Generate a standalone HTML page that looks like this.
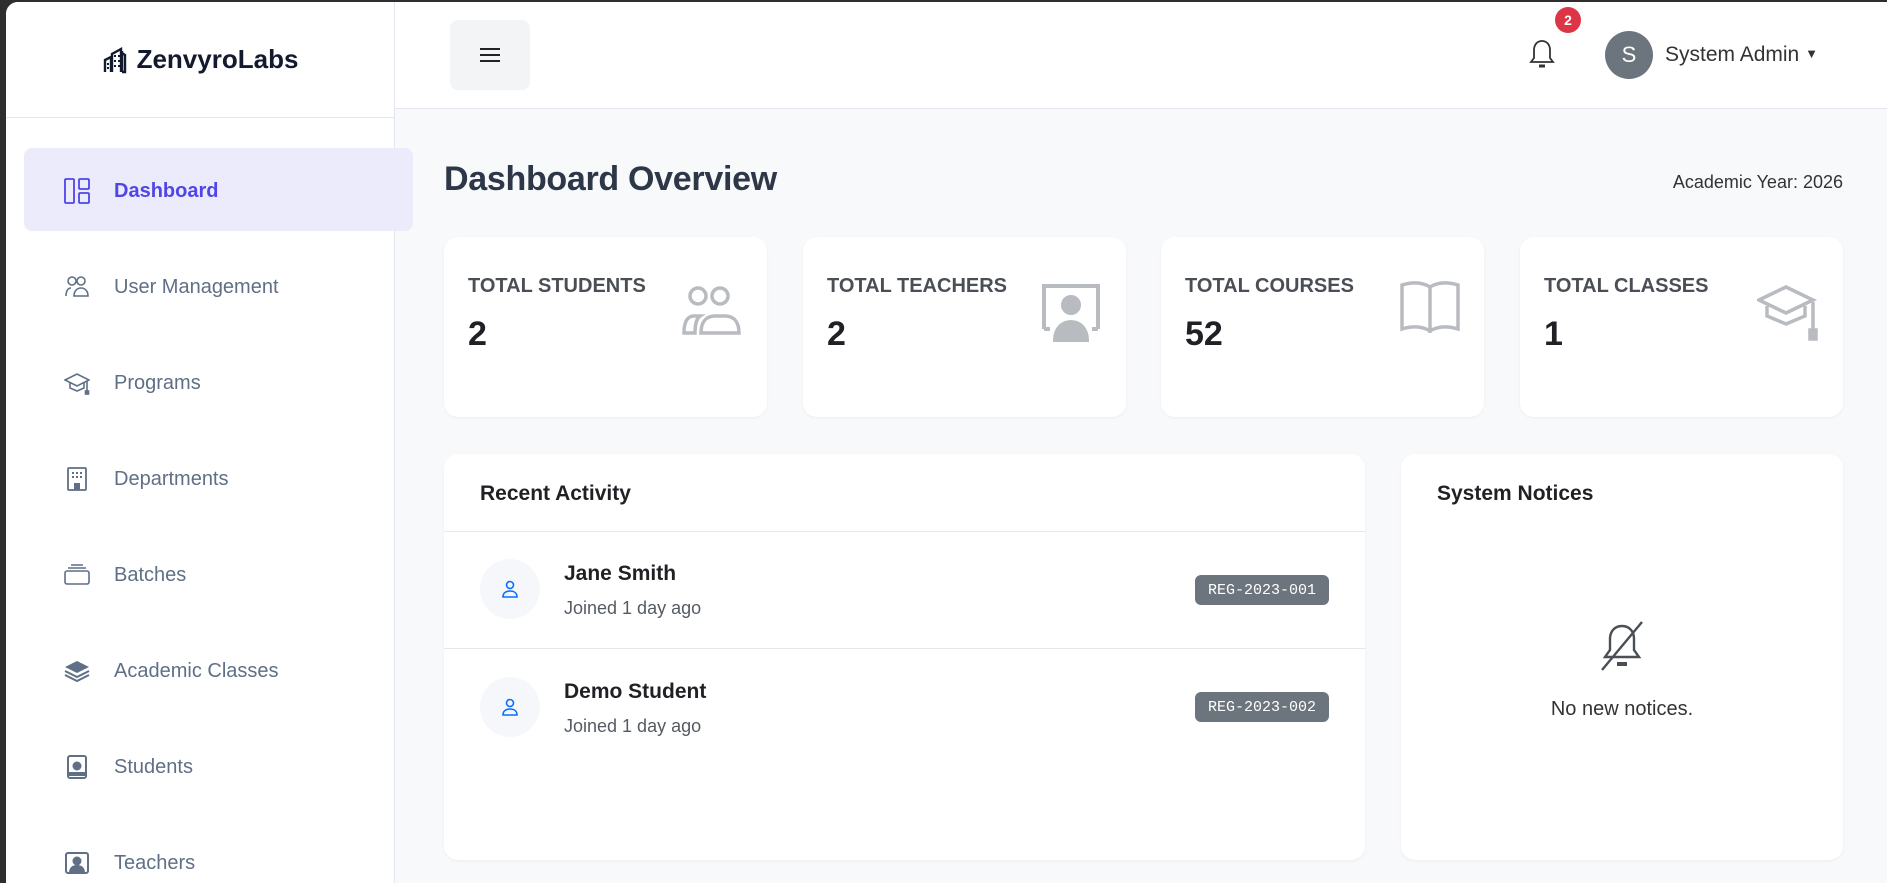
<!DOCTYPE html>
<html><head><meta charset="utf-8"><style>
*{margin:0;padding:0;box-sizing:border-box}
body{width:1887px;height:883px;overflow:hidden;background:#2e2e2e;font-family:"Liberation Sans",sans-serif;position:relative}
.app{position:absolute;left:6px;top:2px;right:0;bottom:0;background:#f8f9fb;border-top-left-radius:12px;overflow:hidden}
.side{position:absolute;left:0;top:0;width:389px;height:100%;background:#fff;border-right:1px solid #e3e6ee}
.logo{position:absolute;left:0;top:0;width:389px;height:116px;border-bottom:1px solid #e3e6ee;display:flex;align-items:center;justify-content:center;font-weight:bold;font-size:26px;color:#141a2e;gap:6px}
.nav{position:absolute;left:58px;font-size:20px;color:#5f6f86;display:flex;align-items:center;gap:24px}
.nav svg{width:26px;height:26px}
.active{position:absolute;left:18px;top:146px;width:389px;height:83px;background:#ecebfb;border-radius:8px}
.hdr{position:absolute;left:389px;top:0;right:0;height:107px;background:#fff;border-bottom:1px solid #e3e6ee}
.card{position:absolute;background:#fff;border-radius:14px;box-shadow:0 1px 3px rgba(0,0,0,.05)}
.lbl{position:absolute;left:24px;top:38px;font-size:20px;font-weight:bold;color:#4a4e55}
.val{position:absolute;left:24px;top:78px;font-size:34px;font-weight:bold;color:#1f2125}
.ic{position:absolute;right:24px;top:44px}
.badge{position:absolute;left:751px;width:134px;height:30px;background:#6c757d;color:#fff;border-radius:6px;font-family:"Liberation Mono",monospace;font-size:15px;display:flex;align-items:center;justify-content:center}
.av{position:absolute;left:36px;width:60px;height:60px;border-radius:50%;background:#f5f7fa;display:flex;align-items:center;justify-content:center}
.nm{position:absolute;left:120px;font-size:21px;font-weight:bold;color:#1f2125}
.sub{position:absolute;left:120px;font-size:18px;color:#555b63}
</style></head><body><div class="app">
<div class="side">
 <div class="logo"><svg width="28" height="28" viewBox="0 0 28 28"><path d="M2 26V14l6-3v15M9 26V8l9-5v23M19 26V5M19 26h3V9l-3-2" fill="none" stroke="#141a2e" stroke-width="2.4"/><g fill="#141a2e"><rect x="11" y="9" width="2" height="2"/><rect x="15" y="9" width="2" height="2"/><rect x="11" y="14" width="2" height="2"/><rect x="15" y="14" width="2" height="2"/><rect x="11" y="19" width="2" height="2"/><rect x="15" y="19" width="2" height="2"/><rect x="4" y="17" width="2" height="2"/><rect x="4" y="21" width="2" height="2"/></g></svg>ZenvyroLabs</div>
 <div class="active"></div>
 <div class="nav" style="top:176px;color:#4f46e5;font-weight:bold"><svg viewBox="0 0 26 26" fill="none" stroke="#4f46e5" stroke-width="1.8"><rect x="1" y="1" width="9" height="24" rx="1"/><rect x="15" y="1" width="10" height="10" rx="1"/><rect x="15" y="15" width="10" height="10" rx="1"/></svg>Dashboard</div>
 <div class="nav" style="top:272px"><svg viewBox="0 0 26 26" fill="none" stroke="#5f6f86" stroke-width="1.6"><circle cx="8" cy="7" r="4"/><circle cx="17" cy="7" r="4"/><path d="M2 22c0-5 2-8 5-8M10 22c0-5 3-8 7-8s7 3 7 8z"/></svg>User Management</div>
 <div class="nav" style="top:368px"><svg viewBox="0 0 26 26" fill="none" stroke="#5f6f86" stroke-width="1.6"><path d="M1 10l12-6 12 6-12 6zM6 13v5l7 3 7-3v-5M23 11v10"/><rect x="21.5" y="21" width="3" height="3" fill="#5f6f86"/></svg>Programs</div>
 <div class="nav" style="top:464px"><svg viewBox="0 0 26 26" fill="none" stroke="#5f6f86" stroke-width="1.8"><rect x="4" y="2" width="18" height="22" rx="1"/><g fill="#5f6f86" stroke="none"><rect x="8" y="6" width="2" height="2"/><rect x="12" y="6" width="2" height="2"/><rect x="16" y="6" width="2" height="2"/><rect x="8" y="10" width="2" height="2"/><rect x="12" y="10" width="2" height="2"/><rect x="16" y="10" width="2" height="2"/><rect x="10" y="17" width="6" height="7"/></g></svg>Departments</div>
 <div class="nav" style="top:560px"><svg viewBox="0 0 26 26" fill="none" stroke="#5f6f86" stroke-width="1.6"><rect x="1" y="9" width="24" height="13" rx="2"/><path d="M4 6h18M7 3h12"/></svg>Batches</div>
 <div class="nav" style="top:656px"><svg viewBox="0 0 26 26"><path d="M13 3l12 6-12 6L1 9z" fill="#5f6f86"/><path d="M1 13l12 6 12-6M1 17l12 6 12-6" fill="none" stroke="#5f6f86" stroke-width="2"/></svg>Academic Classes</div>
 <div class="nav" style="top:752px"><svg viewBox="0 0 26 26" fill="none" stroke="#5f6f86" stroke-width="2"><rect x="4" y="2" width="18" height="22" rx="2"/><circle cx="13" cy="12" r="3.5" fill="#5f6f86"/><path d="M5 20h16" stroke-width="4"/></svg>Students</div>
 <div class="nav" style="top:848px"><svg viewBox="0 0 26 26" fill="none" stroke="#5f6f86" stroke-width="2"><rect x="2" y="3" width="22" height="20" rx="2"/><circle cx="13" cy="11" r="3.5" fill="#5f6f86"/><path d="M6 23c0-5 3-7 7-7s7 2 7 7z" fill="#5f6f86"/></svg>Teachers</div>
</div>
<div class="hdr">
 <div style="position:absolute;left:55px;top:18px;width:80px;height:70px;background:#f3f4f6;border-radius:8px;display:flex;align-items:center;justify-content:center"><svg width="22" height="16"><path d="M1 2h20M1 8h20M1 14h20" stroke="#222" stroke-width="2"/></svg></div>
 <svg style="position:absolute;left:1132px;top:36px" width="30" height="34" viewBox="0 0 30 34" fill="none" stroke="#333" stroke-width="1.8"><path d="M15 3c-5 0-8 4-8 9v8l-3 4h22l-3-4v-8c0-5-3-9-8-9z"/><path d="M12 28h6" stroke-width="3"/></svg>
 <div style="position:absolute;left:1160px;top:5px;width:26px;height:26px;border-radius:50%;background:#dc3545;color:#fff;font-size:14px;font-weight:bold;display:flex;align-items:center;justify-content:center">2</div>
 <div style="position:absolute;left:1210px;top:29px;width:48px;height:48px;border-radius:50%;background:#6c757d;color:#fff;font-size:22px;display:flex;align-items:center;justify-content:center">S</div>
 <div style="position:absolute;left:1270px;top:41px;font-size:21px;color:#333">System Admin <span style="font-size:13px;vertical-align:3px">▼</span></div>
</div>
<div style="position:absolute;left:438px;top:158px;font-size:34px;font-weight:bold;color:#2d3748;letter-spacing:-0.3px">Dashboard Overview</div>
<div style="position:absolute;right:44px;top:170px;font-size:18px;color:#333">Academic Year: 2026</div>

<div class="card" style="left:438px;top:235px;width:323px;height:180px"><div class="lbl">TOTAL STUDENTS</div><div class="val">2</div>
<svg class="ic" width="62" height="54" viewBox="0 0 62 54" fill="none" stroke="#b8bcc0" stroke-width="3.5"><circle cx="17" cy="15" r="8"/><circle cx="39" cy="15" r="8"/><path d="M3 52c0-12 4-17 10-17h6c-3 2-5 8-5 17zM20 52c0-12 6-17 14-17h10c8 0 14 5 14 17z"/></svg></div>
<div class="card" style="left:797px;top:235px;width:323px;height:180px"><div class="lbl">TOTAL TEACHERS</div><div class="val">2</div>
<svg class="ic" style="top:46px" width="62" height="60" viewBox="0 0 62 60" fill="none" stroke="#b8bcc0" stroke-width="4"><path d="M4 46V3h54v43M4 46h6M58 46h-6"/><circle cx="31" cy="22" r="8" fill="#b8bcc0"/><path d="M15 57c0-12 8-18 16-18s16 6 16 18z" fill="#b8bcc0"/></svg></div>
<div class="card" style="left:1155px;top:235px;width:323px;height:180px"><div class="lbl">TOTAL COURSES</div><div class="val">52</div>
<svg class="ic" width="60" height="52" viewBox="0 0 60 52" fill="none" stroke="#b8bcc0" stroke-width="3.5"><path d="M2 4c10-3 20-3 28 2v44c-8-5-18-5-28-2zM58 4c-10-3-20-3-28 2v44c8-5 18-5 28-2z"/></svg></div>
<div class="card" style="left:1514px;top:235px;width:323px;height:180px"><div class="lbl">TOTAL CLASSES</div><div class="val">1</div>
<svg class="ic" style="top:48px" width="62" height="56" viewBox="0 0 62 56" fill="none" stroke="#b8bcc0" stroke-width="3.5"><path d="M2 15l27-13 27 13-27 13zM10 21v10l19 8 19-8v-10M56 17v30"/><rect x="53" y="45" width="6" height="9" fill="#b8bcc0"/></svg></div>

<div class="card" style="left:438px;top:452px;width:921px;height:406px">
 <div style="position:absolute;left:36px;top:28px;font-size:21px;font-weight:bold;color:#1f2125">Recent Activity</div>
 <div style="position:absolute;left:0;right:0;top:77px;border-top:1px solid #e5e7eb"></div>
 <div class="av" style="top:105px"><svg width="18" height="20" viewBox="0 0 18 20" fill="none" stroke="#0d6efd" stroke-width="1.6"><circle cx="9" cy="6" r="3.5"/><path d="M2 18c0-4 3-6 7-6s7 2 7 6z"/></svg></div>
 <div class="nm" style="top:108px">Jane Smith</div><div class="sub" style="top:144px">Joined 1 day ago</div>
 <div class="badge" style="top:121px">REG-2023-001</div>
 <div style="position:absolute;left:0;right:0;top:194px;border-top:1px solid #e5e7eb"></div>
 <div class="av" style="top:223px"><svg width="18" height="20" viewBox="0 0 18 20" fill="none" stroke="#0d6efd" stroke-width="1.6"><circle cx="9" cy="6" r="3.5"/><path d="M2 18c0-4 3-6 7-6s7 2 7 6z"/></svg></div>
 <div class="nm" style="top:226px">Demo Student</div><div class="sub" style="top:262px">Joined 1 day ago</div>
 <div class="badge" style="top:238px">REG-2023-002</div>
</div>
<div class="card" style="left:1395px;top:452px;width:442px;height:406px">
 <div style="position:absolute;left:36px;top:28px;font-size:21px;font-weight:bold;color:#1f2125">System Notices</div>
 <svg style="position:absolute;left:197px;top:166px" width="48" height="52" viewBox="0 0 48 52" fill="none" stroke="#4a4e55" stroke-width="2.4"><path d="M24 6c-8 0-12 6-12 13v11l-5 7h34l-5-7V19c0-7-4-13-12-13z"/><path d="M19 44h10" stroke-width="4"/><path d="M4 50L44 2"/></svg>
 <div style="position:absolute;left:0;right:0;top:244px;text-align:center;font-size:20px;color:#333">No new notices.</div>
</div>
</div></body></html>
